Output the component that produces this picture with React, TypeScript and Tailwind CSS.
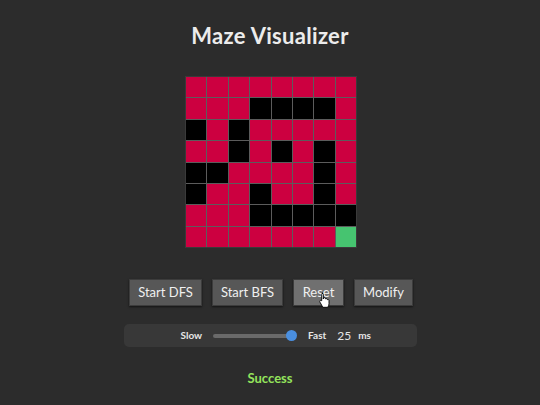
import { useState } from 'react';

// 0 = open (red), 1 = wall, 2 = goal
const MAZE: number[][] = [
  [0, 0, 0, 0, 0, 0, 0, 0],
  [0, 0, 0, 1, 1, 1, 1, 0],
  [1, 0, 1, 0, 0, 0, 0, 0],
  [0, 0, 1, 0, 1, 0, 1, 0],
  [1, 1, 0, 0, 0, 0, 1, 0],
  [1, 0, 0, 1, 0, 0, 1, 0],
  [0, 0, 0, 1, 1, 1, 1, 1],
  [0, 0, 0, 0, 0, 0, 0, 2],
];

const cellColor = (v: number) =>
  v === 1 ? 'bg-black' : v === 2 ? 'bg-[#46c470]' : 'bg-[#cc0040]';

function HandCursor() {
  return (
    <svg
      className="absolute left-[24px] top-[12px]"
      width="13"
      height="16"
      viewBox="0 0 13 16"
    >
      <path
        d="M4 1.2c.8 0 1.3.6 1.3 1.3V7l.2-1.2c.6-.5 1.6-.3 1.8.5l.1.6c.5-.6 1.5-.5 1.8.3l.1.6c.5-.5 1.5-.3 1.7.5v3.5c0 1.6-.6 2.7-1.4 3.5H4.8L2 10.2c-.5-.7-.3-1.5.4-1.8.5-.2 1 0 1.3.4V2.5c0-.7.5-1.3 1.2-1.3z"
        fill="#fff"
        stroke="#000"
        strokeWidth="0.9"
        strokeLinejoin="round"
      />
    </svg>
  );
}

export default function App() {
  const [speed] = useState(25);

  const buttons = [
    { label: 'Start DFS', w: 'w-[73px]' },
    { label: 'Start BFS', w: 'w-[71px]' },
    { label: 'Reset', w: 'w-[51px]', hover: true },
    { label: 'Modify', w: 'w-[59px]' },
  ];

  return (
    <div className="w-[540px] h-[405px] bg-[#2c2c2c] flex flex-col items-center font-['Lato',sans-serif] overflow-hidden">
      <h1 className="mt-[22px] text-[22px] leading-[28px] font-bold text-[#ececec] tracking-[0.3px]">
        Maze Visualizer
      </h1>

      <div className="mt-[26px] ml-[2px] grid grid-cols-8 grid-rows-8 gap-px w-[172px] h-[172px] bg-[#5c5c5c] border border-[#3a3a3a]">
        {MAZE.flatMap((row, r) =>
          row.map((v, c) => <div key={`${r}-${c}`} className={cellColor(v)} />)
        )}
      </div>

      <div className="mt-[31px] ml-[2px] flex gap-[10px]">
        {buttons.map((b) => (
          <button
            key={b.label}
            className={`relative h-[27px] ${b.w} text-[13px] text-[#f0f0f0] border border-[#3c3c3c] shadow-[0_1px_2px_rgba(0,0,0,0.6)] ${
              b.hover ? 'bg-[#707070]' : 'bg-[#575757]'
            }`}
          >
            {b.label}
            {b.hover && <HandCursor />}
          </button>
        ))}
      </div>

      <div className="mt-[18px] w-[293px] h-[23px] rounded-[5px] bg-[#383838] flex items-center text-[10px] font-bold text-[#e6e6e6]">
        <span className="ml-[57px]">Slow</span>
        <div className="ml-[11px] relative w-[78px] h-[4px] rounded-full bg-[#6a6a6a]">
          <div className="absolute right-[-6px] top-[-4px] w-[11px] h-[11px] rounded-full bg-[#4a8fe0]" />
        </div>
        <span className="ml-[17px]">Fast</span>
        <span className="ml-[11px] text-[12px] font-normal">{speed}</span>
        <span className="ml-[7px]">ms</span>
      </div>

      <div className="mt-[22px] text-[13px] font-bold text-[#94e45c]">Success</div>
    </div>
  );
}
